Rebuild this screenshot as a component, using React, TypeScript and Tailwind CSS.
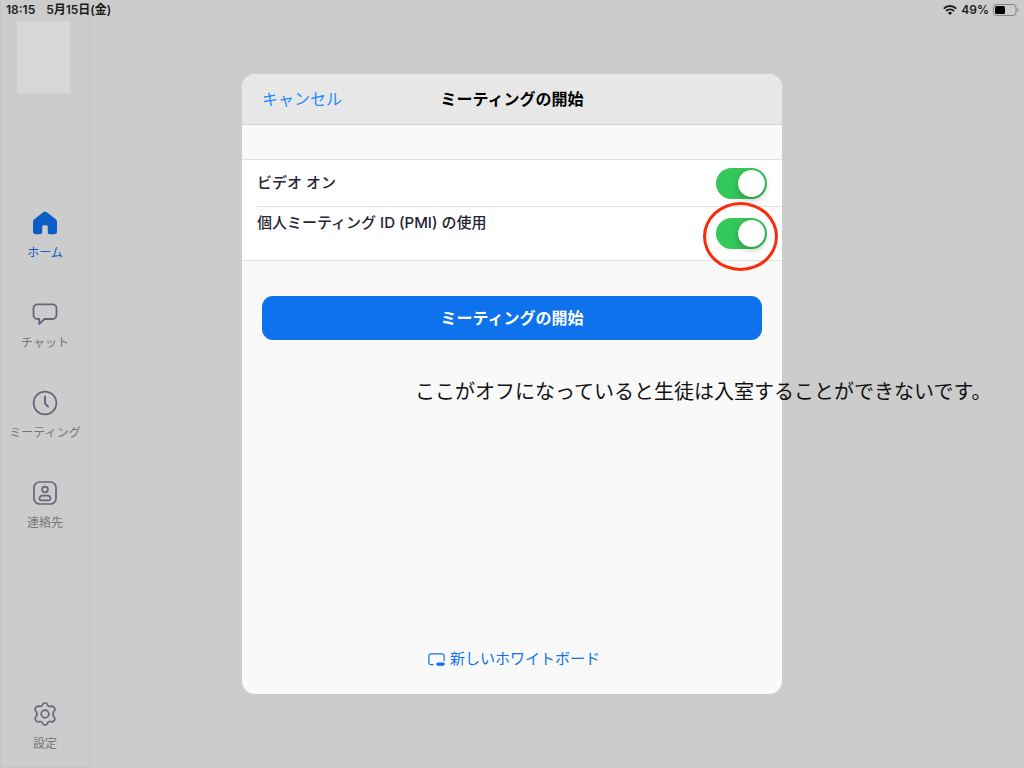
import { useState } from "react";
import type { ReactNode } from "react";
import clsx from "clsx";

const sideItems = [
  { label: "ホーム", icon: <HomeIcon />, active: true },
  { label: "チャット", icon: <ChatIcon />, active: false },
  { label: "ミーティング", icon: <ClockIcon />, active: false },
  { label: "連絡先", icon: <ContactsIcon />, active: false },
];

function HomeIcon() {
  return (
    <svg viewBox="0 0 24 24" className="size-6" fill="currentColor" aria-hidden="true">
      <path d="M10.2 1.200a2.800 2.800 0 0 1 3.600 0l8.700 6.900A3.900 3.900 0 0 1 24 11.200V20.500a2.800 2.800 0 0 1-2.800 2.800h-4.400a2 2 0 0 1-2-2v-5.500a1.500 1.500 0 0 0-1.500-1.500h-2.600a1.500 1.500 0 0 0-1.500 1.500v5.500a2 2 0 0 1-2 2H2.800A2.800 2.800 0 0 1 0 20.500V11.200A3.900 3.900 0 0 1 1.500 8.100z" />
    </svg>
  );
}

function ChatIcon() {
  return (
    <svg viewBox="0 0 26 24" className="h-6 w-[26px]" fill="none" stroke="currentColor" strokeWidth="1.800" strokeLinejoin="round" aria-hidden="true">
      <path d="M5.500 3.300h15a4 4 0 0 1 4 4v6.700a4 4 0 0 1-4 4H12.500L7.200 23v-5H5.500a4 4 0 0 1-4-4V7.300a4 4 0 0 1 4-4z" />
    </svg>
  );
}

function ClockIcon() {
  return (
    <svg viewBox="0 0 24 24" className="size-6 overflow-visible" fill="none" stroke="currentColor" strokeWidth="1.700" aria-hidden="true">
      <circle cx="12" cy="12" r="11.400" />
      <path d="M12 5.500v6q0 1 .7 1.700l2.300 2.300" strokeWidth="2" strokeLinecap="round" />
    </svg>
  );
}

function ContactsIcon() {
  return (
    <svg viewBox="0 0 24 24" className="size-6" fill="none" stroke="currentColor" strokeWidth="1.700" aria-hidden="true">
      <rect x="1" y="1" width="22" height="22" rx="5.500" />
      <circle cx="12" cy="8.500" r="2.900" />
      <path d="M9.500 14.700h5a3 3 0 0 1 3 2.700q0 1.900-2 1.900h-7q-2 0-2-1.900a3 3 0 0 1 3-2.700z" />
    </svg>
  );
}

function GearIcon() {
  return (
    <svg viewBox="0 0 24 24" className="size-6" fill="none" stroke="currentColor" strokeWidth="1.700" strokeLinejoin="round" aria-hidden="true">
      <path d="M9.500 2.800Q10 1 12 1t2.500 1.800q.7 2.100 2.900 1.600l1.300-.3q2 0 2.900 1.900.8 1.600-.4 3-1.200 1.300-1.200 3t1.200 3q1.200 1.400.4 3-.9 1.900-2.900 1.900l-1.300-.3q-2.200-.5-2.900 1.600Q14 23 12 23t-2.500-1.800q-.7-2.100-2.900-1.600l-1.300.3q-2 0-2.900-1.900-.8-1.600.4-3Q4 13.700 4 12t-1.200-3Q1.600 7.600 2.400 6q.9-1.900 2.900-1.900l1.300.3q2.200.5 2.900-1.600z" />
      <circle cx="12" cy="12" r="3.800" />
    </svg>
  );
}

function WhiteboardIcon() {
  return (
    <svg viewBox="0 0 17 13" className="h-[13px] w-[17px]" fill="none" stroke="currentColor" strokeWidth="1.200" strokeLinecap="round" aria-hidden="true">
      <path d="M5 11.700H2.900a2 2 0 0 1-2-2V2.800a2 2 0 0 1 2-2h11.200a2 2 0 0 1 2 2v5" />
      <rect x="8.800" y="10" width="7.400" height="2.200" rx="1.100" fill="currentColor" />
    </svg>
  );
}

function WifiIcon() {
  return (
    <svg viewBox="0 0 14 10" className="h-[10px] w-[14px]" fill="none" stroke="currentColor" strokeWidth="1.900" aria-hidden="true">
      <path d="M.8 3.600a8.800 8.800 0 0 1 12.400 0M3 6a5.700 5.700 0 0 1 8 0" />
      <path d="M4.900 7.900a3 3 0 0 1 4.200 0L7 10z" fill="currentColor" stroke="none" />
    </svg>
  );
}

function BatteryIcon() {
  return (
    <svg viewBox="0 0 26 12" className="h-3 w-[26px]" aria-hidden="true">
      <rect x=".5" y=".5" width="22.500" height="11" rx="3" fill="none" stroke="#858585" />
      <rect x="2" y="2" width="10" height="8" rx="1.500" fill="#000" />
      <path d="M24.300 4a2.300 2.300 0 0 1 0 4z" fill="#858585" />
    </svg>
  );
}

function SideButton({ label, icon, active }: { label: string; icon: ReactNode; active?: boolean }) {
  return (
    <button
      type="button"
      className={clsx(
        "flex w-full flex-col items-center gap-[9px] text-xs leading-[18px] whitespace-nowrap",
        active ? "text-[#0b5cc4]" : "text-[#777779]",
      )}
    >
      <span className={active ? "text-[#0b5cc4]" : "text-[#66667a]"}>{icon}</span>
      {label}
    </button>
  );
}

function Switch({ id, checked, onChange }: { id: string; checked: boolean; onChange: (value: boolean) => void }) {
  return (
    <input
      id={id}
      type="checkbox"
      role="switch"
      checked={checked}
      onChange={(e) => onChange(e.target.checked)}
      className="flex h-[31px] w-[51px] shrink-0 appearance-none items-center rounded-full bg-[#e5e5ea] p-[2px] before:size-[27px] before:rounded-full before:bg-white before:shadow-[0_3px_6px_rgba(0,0,0,0.25)] before:content-[''] checked:justify-end checked:bg-[#34c759]"
    />
  );
}

export default function App() {
  const [videoOn, setVideoOn] = useState(true);
  const [usePmi, setUsePmi] = useState(true);

  return (
    <div className="relative flex min-h-screen bg-[#cccccc] font-[Inter,'Noto_Sans_CJK_JP',sans-serif]">
      <header className="absolute inset-x-0 top-0 flex h-5 items-center justify-between pr-[5px] pl-[6px] text-xs font-semibold text-[#1c1c1c]">
        <div className="flex gap-[11px]">
          <span>18:15</span>
          <span>5月15日(金)</span>
        </div>
        <div className="flex items-center gap-1">
          <WifiIcon />
          <span>49%</span>
          <BatteryIcon />
        </div>
      </header>

      <nav className="flex w-[90px] shrink-0 flex-col border border-t-0 border-[#c5c5c5] pt-[21px] pb-[14px]">
        <div className="ml-4 h-[72px] w-[53px] bg-[#d7d7d7]" />
        <div className="mt-[118px] mb-10 flex flex-col gap-[39px]">
          {sideItems.map((item) => (
            <SideButton key={item.label} {...item} />
          ))}
        </div>
        <div className="mt-auto">
          <SideButton label="設定" icon={<GearIcon />} />
        </div>
      </nav>

      <div className="absolute inset-0 flex items-center justify-center">
        <section
          role="dialog"
          aria-labelledby="dialog-title"
          className="relative flex min-h-[620px] w-full max-w-[540px] flex-col rounded-[13px] bg-[#f9f9f9]"
        >
          <div className="grid h-[51px] grid-cols-[1fr_auto_1fr] items-center rounded-t-[13px] border-b border-[#d0d0d0] bg-[#e7e7e7] px-5">
            <button type="button" className="justify-self-start text-base text-[#2389ff]">
              キャンセル
            </button>
            <h1 id="dialog-title" className="text-base font-bold text-black">
              ミーティングの開始
            </h1>
          </div>

          <div className="mt-[34px] border-y border-[#e2e2e2] bg-white pl-[15px] text-[15px] font-medium text-[#232333]">
            <div className="flex h-[47px] items-center justify-between border-b border-[#e2e2e2] pr-[15px]">
              <label htmlFor="video-on">ビデオ オン</label>
              <Switch id="video-on" checked={videoOn} onChange={setVideoOn} />
            </div>
            <div className="flex h-[53px] items-center justify-between pr-[15px]">
              <label htmlFor="use-pmi" className="self-start pt-[5px]">
                個人ミーティング ID (PMI) の使用
              </label>
              <div className="relative">
                <Switch id="use-pmi" checked={usePmi} onChange={setUsePmi} />
                <span className="pointer-events-none absolute -top-4 -left-[13px] h-[69px] w-[75px] rounded-[50%] border-3 border-[#f92c0c]" />
              </div>
            </div>
          </div>

          <button
            type="button"
            className="mx-5 mt-[35px] h-11 rounded-[11px] bg-[#0e72ed] text-base font-semibold text-white"
          >
            ミーティングの開始
          </button>

          <div className="mt-auto mb-6 flex justify-center pl-1">
            <button
              type="button"
              className="flex items-center gap-[5px] text-[15px] leading-[22px] text-[#0e72ed]"
            >
              <WhiteboardIcon />
              新しいホワイトボード
            </button>
          </div>

          <p className="absolute top-[303px] left-[173px] text-xl leading-[30px] whitespace-nowrap text-[#111111]">
            ここがオフになっていると生徒は入室することができないです。
          </p>
        </section>
      </div>
    </div>
  );
}
